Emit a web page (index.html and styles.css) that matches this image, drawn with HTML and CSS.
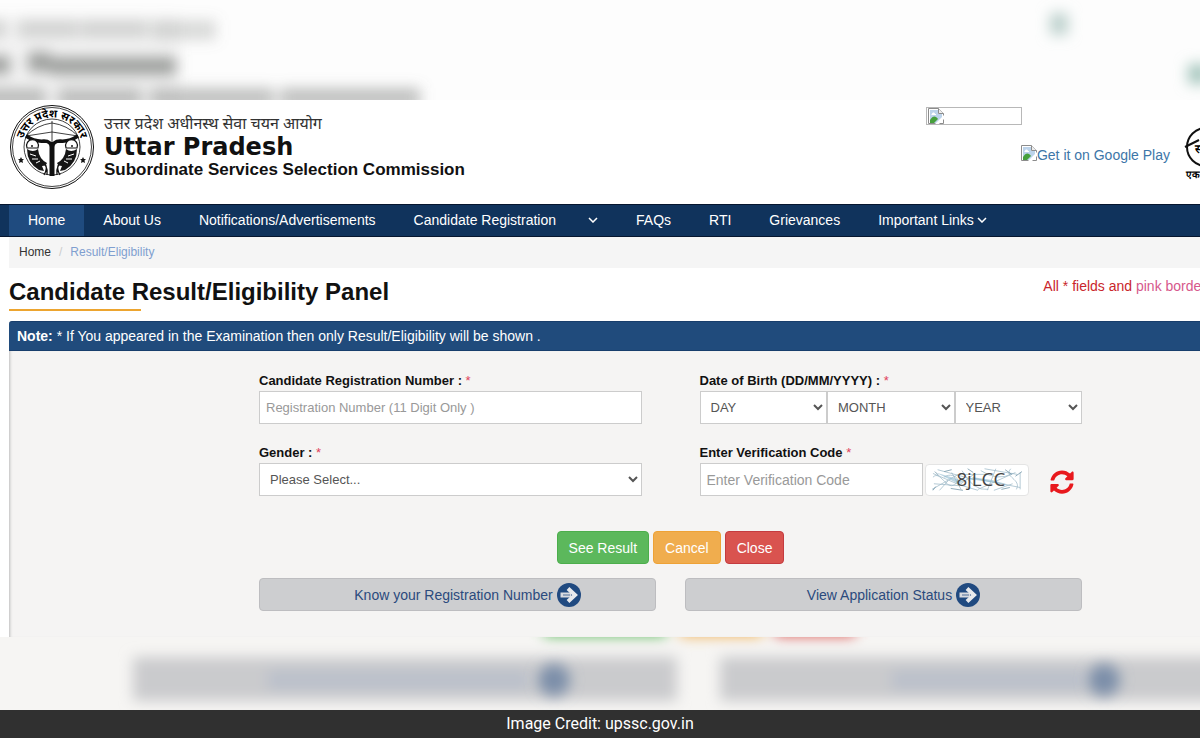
FILE: index.html
```html
<!DOCTYPE html>
<html lang="en">
<head>
    <meta charset="UTF-8">
    <meta name="viewport" content="width=device-width, initial-scale=1.0">
    <title>Candidate Result/Eligibility Panel</title>
    <link rel="stylesheet" href="styles.css">
</head>
<body>

<!-- Shared symbols -->
<svg class="symbols" width="0" height="0" aria-hidden="true">
    <symbol id="broken-image" viewBox="0 0 16 16">
        <path d="M.5.5h10l5 5v10H.5z" fill="#fff" stroke="#8c8c8c"/>
        <path d="M2 2h8v4h4v4l-5 5H2z" fill="#bcd3ea"/>
        <path d="M4 6c0-2 3-2 3 0h1v1H3z" fill="#fff"/>
        <path d="M2 15v-3c3-5 6-4 8-1l-4 4z" fill="#46a03c"/>
        <path d="M10.500.5v5h5" fill="#eee" stroke="#8c8c8c"/>
        <path d="M16 7L7 16h4l5-5z" fill="#fff"/>
    </symbol>
    <symbol id="arrow-circle" viewBox="0 0 24 24">
        <circle cx="12" cy="12" r="12" fill="#204a80"/>
        <path d="M3.500 9.500h10.500v5H3.500z" fill="#d8dbe0"/>
        <path d="M11 5.500l7 6.500-7 6.500" fill="none" stroke="#e8eaed" stroke-width="4"/>
        <path d="M6 12h7" stroke="#204a80" stroke-width="1.500" opacity=".5"/>
    </symbol>
    <symbol id="chevron" viewBox="0 0 10 6">
        <path d="M1 1l4 4 4-4" fill="none" stroke="#fff" stroke-width="1.500"/>
    </symbol>
</svg>

<!-- Blurred strip above the page -->
<div class="backdrop" aria-hidden="true">
    <svg width="100%" height="100">
        <defs>
            <filter id="soft" x="-20%" y="-80%" width="140%" height="260%"><feGaussianBlur stdDeviation="7"/></filter>
        </defs>
        <g filter="url(#soft)" fill="#7d807d">
            <rect x="-20" y="16" width="200" height="90" opacity=".07"/>
            <g opacity=".28">
                <rect x="-20" y="20" width="26" height="18"/>
                <rect x="18" y="20" width="60" height="18"/>
                <rect x="80" y="20" width="68" height="18"/>
                <rect x="152" y="20" width="64" height="20"/>
            </g>
            <g opacity=".72">
                <rect x="-20" y="56" width="30" height="18"/>
                <rect x="28" y="52" width="22" height="20"/>
                <rect x="50" y="57" width="126" height="18"/>
            </g>
            <g opacity=".48">
                <rect x="-20" y="88" width="66" height="20"/>
                <rect x="58" y="88" width="84" height="20"/>
                <rect x="150" y="88" width="124" height="20"/>
                <rect x="280" y="88" width="140" height="20"/>
            </g>
        </g>
        <g filter="url(#soft)">
            <rect x="1050" y="13" width="18" height="22" fill="#bcd0cc"/>
            <rect x="1188" y="64" width="20" height="20" fill="#a5c6bd"/>
        </g>
    </svg>
</div>

<div class="page">
    <header class="header">
        <svg class="emblem" viewBox="0 0 84 84" role="img" aria-label="Government of Uttar Pradesh emblem">
            <defs>
                <path id="emblem-arc" d="M13 50A30 30 0 1 1 71 50"/>
            </defs>
            <g fill="none" stroke="#111">
                <circle cx="42" cy="42" r="41.500"/>
                <circle cx="42" cy="42" r="39.500" stroke-width=".8"/>
                <circle cx="42" cy="42" r="28" stroke-width=".8"/>
                <path d="M16 31Q27 20 42 18Q57 20 68 31M16 31L42 27 68 31M42 16v22" stroke-width=".8"/>
                <path d="M16 31Q25 37 34 36Q41 36 42 43Q43 36 50 36Q59 37 68 31" stroke-width="3.500"/>
                <path d="M42 37v34" stroke-width="5"/>
                <path d="M37 70c1-8-2-11-6-14M47 70c-1-8 2-11 6-14M34 70q4-7 1-11M50 70q-4-7-1-11" stroke-width="1.300"/>
                <path d="M17 43a6 6 0 1 1 11 0zM56 43a6 6 0 1 1 11 0z" fill="#fff" stroke-width="1.200"/>
            </g>
            <g fill="#161616">
                <path d="M17 44Q17 58 29 65L34 66 32 61Q36 61 37 58Q29 54 28 44Q23 48 17 44z"/>
                <path d="M67 44Q67 58 55 65L50 66 52 61Q48 61 47 58Q55 54 56 44Q61 48 67 44z"/>
                <path d="M11 52l1 2h2l-1.500 1.500.5 2.500-2-1-2 1 .5-2.500L8 54h2zM73 52l1 2h2l-1.500 1.500.5 2.500-2-1-2 1 .5-2.500L70 54h2z"/>
                <circle cx="22" cy="41" r="1"/>
                <circle cx="62" cy="41" r="1"/>
            </g>
            <path d="M20 49l6 2M22 54l6 0M26 58l4-2M64 49l-6 2M62 54h-6M58 58l-4-2" stroke="#fff" stroke-width="1" fill="none"/>
            <text class="emblem-text"><textPath href="#emblem-arc" startOffset="50%" text-anchor="middle">उत्तर प्रदेश सरकार</textPath></text>
        </svg>
        <div class="brand">
            <p class="brand-hindi" lang="hi">उत्तर प्रदेश अधीनस्थ सेवा चयन आयोग</p>
            <p class="brand-state">Uttar Pradesh</p>
            <p class="brand-name">Subordinate Services Selection Commission</p>
        </div>
        <div class="header-links">
            <div class="missing-image"><svg width="16" height="16"><use href="#broken-image"/></svg></div>
            <a class="play-link" href="#"><svg width="16" height="16"><use href="#broken-image"/></svg>Get it on Google Play</a>
        </div>
        <!-- Swachh Bharat glasses, run off the right edge -->
        <svg class="swachh" viewBox="0 0 60 60" role="img" aria-label="Swachh Bharat">
            <g fill="none" stroke="#111" stroke-width="2">
                <circle cx="22" cy="20" r="19"/>
                <path d="M1 20L15 13"/>
            </g>
            <text x="11" y="26" class="swachh-word">स्वच्छ</text>
            <text x="2" y="51" class="swachh-line">एक कदम</text>
        </svg>
    </header>

    <nav class="nav">
        <a class="active" href="#">Home</a>
        <a href="#">About Us</a>
        <a href="#">Notifications/Advertisements</a>
        <a class="wide" href="#">Candidate Registration <svg width="10" height="6"><use href="#chevron"/></svg></a>
        <a href="#">FAQs</a>
        <a href="#">RTI</a>
        <a href="#">Grievances</a>
        <a class="drop" href="#">Important Links <svg width="10" height="6"><use href="#chevron"/></svg></a>
    </nav>

    <main class="content">
        <div class="breadcrumb">
            <a href="#">Home</a><span class="slash">/</span><span class="current">Result/Eligibility</span>
        </div>

        <div class="title-row">
            <h1>Candidate Result/Eligibility Panel</h1>
            <p class="hint">All * fields and <span>pink border</span></p>
        </div>

        <div class="note"><strong>Note:</strong> * If You appeared in the Examination then only Result/Eligibility will be shown .</div>

        <form class="panel">
            <div class="fields">
                <div class="field">
                    <label for="regno">Candidate Registration Number : <span class="req">*</span></label>
                    <input type="text" id="regno" class="control small" placeholder="Registration Number (11 Digit Only )">
                </div>
                <div class="field">
                    <label for="day">Date of Birth (DD/MM/YYYY) : <span class="req">*</span></label>
                    <div class="dob">
                        <select id="day" class="control"><option>DAY</option></select>
                        <select class="control" aria-label="Month"><option>MONTH</option></select>
                        <select class="control" aria-label="Year"><option>YEAR</option></select>
                    </div>
                </div>
                <div class="field">
                    <label for="gender">Gender : <span class="req">*</span></label>
                    <select id="gender" class="control"><option>Please Select...</option></select>
                </div>
                <div class="field">
                    <label for="code">Enter Verification Code <span class="req">*</span></label>
                    <div class="verify">
                        <input type="text" id="code" class="control" placeholder="Enter Verification Code">
                        <svg class="captcha" viewBox="0 0 104 32" role="img" aria-label="Verification code image">
                            <g fill="none" stroke="#9dbac8" stroke-width=".8">
                                <path d="M5 9l28 12 20 6M6 20l26 2 18-13M10 5l40 11M4 26l28-16M5 13c8-8 14 14 23 8s-3-14-11-8M60 4l35 6M53 26l40-18M48 14l50 10M72 4l-9 23M88 4c-8 9 12 11 6 22M98 8v18M36 6q12 22 28 20M12 27l9-10M25 8l10 18M40 10h22M56 6q18 12 34 3M70 27l20-7"/>
                                <path d="M7 7l4 4M8 23l-3 4M17 7l8-2M24 25l13 2M42 4l6 4M78 26l9-2M93 12l7-5M82 5l7 5" stroke="#6f93a6"/>
                            </g>
                            <path d="M8 8l24 12 12-5 20 3 22 3-18-5-20-3-10 4z" fill="#8db9ce" opacity=".6"/>
                            <text x="30" y="22">8jLCC</text>
                        </svg>
                        <button type="button" class="refresh" aria-label="Refresh code">
                            <svg width="24" height="24" viewBox="0 0 512 512">
                                <path fill="#e8191d" d="M371 133C339 104 299 88 256 88c-77 0-144 53-163 127-1 5-6 9-12 9H24c-7 0-13-7-12-14C34 95 135 8 256 8c66 0 127 26 171 69l36-36c15-15 41-4 41 17v134c0 13-11 24-24 24H346c-21 0-32-26-17-41zM32 296h134c21 0 32 26 17 41l-42 42c31 29 72 45 115 45 77 0 144-53 163-127 1-5 6-9 12-9h57c7 0 13 7 12 14-22 115-123 202-244 202-66 0-127-26-171-69l-36 36c-15 15-41 4-41-17V320c0-13 11-24 24-24z"/>
                            </svg>
                        </button>
                    </div>
                </div>
            </div>

            <div class="actions">
                <button type="submit" class="btn btn-success">See Result</button>
                <button type="reset" class="btn btn-warning">Cancel</button>
                <button type="button" class="btn btn-danger">Close</button>
            </div>

            <div class="links">
                <a class="link-btn" href="#">Know your Registration Number <svg width="24" height="24"><use href="#arrow-circle"/></svg></a>
                <a class="link-btn" href="#">View Application Status <svg width="24" height="24"><use href="#arrow-circle"/></svg></a>
            </div>
        </form>
    </main>
</div>

<!-- Blurred strip below the page -->
<div class="backdrop backdrop-bottom" aria-hidden="true">
    <svg width="100%" height="73">
        <g filter="url(#soft)">
            <rect x="544" y="-16" width="122" height="15" fill="#5cb85c"/>
            <rect x="680" y="-16" width="82" height="15" fill="#f0ad4e"/>
            <rect x="775" y="-16" width="80" height="15" fill="#d9534f"/>
            <rect x="133" y="20" width="544" height="44" fill="#cacbcd"/>
            <rect x="720" y="20" width="544" height="44" fill="#cacbcd"/>
            <rect x="268" y="34" width="260" height="18" fill="#b9bfcb"/>
            <rect x="892" y="34" width="192" height="18" fill="#b9bfcb"/>
        </g>
        <g filter="url(#soft)" fill="#7c8ea9">
            <circle cx="554" cy="43" r="16"/>
            <circle cx="1104" cy="43" r="16"/>
        </g>
    </svg>
</div>

<footer class="credit">Image Credit: upssc.gov.in</footer>

</body>
</html>
```
FILE: styles.css
```css
* {
    box-sizing: border-box;
}

body {
    margin: 0;
    font-family: "Liberation Sans", Arial, sans-serif;
    font-size: 14px;
    line-height: 20px;
    color: #111;
    background-color: #fefefe;
    overflow-x: hidden;
}

a {
    text-decoration: none;
}

p, h1 {
    margin: 0;
}

.symbols {
    position: absolute;
}

/* Blurred strips */
.backdrop {
    overflow: hidden;
    background-color: #fdfdfd;
}

.backdrop svg {
    display: block;
}

.backdrop-bottom {
    background-color: #f6f5f3;
}

.page {
    background-color: #fff;
    overflow: hidden;
}

/* Header */
.header {
    display: flex;
    height: 104px;
    padding: 5px 0 0 10px;
}

.emblem {
    width: 84px;
    height: 84px;
    flex: none;
}

.emblem-text {
    font-family: "Noto Sans", "Noto Sans Devanagari", sans-serif;
    font-size: 11px;
    font-weight: bold;
}

.brand {
    margin-left: 10px;
    padding-top: 6px;
    white-space: nowrap;
}

.brand-hindi {
    font-family: "Noto Sans", "Noto Sans Devanagari", sans-serif;
    font-size: 16px;
    line-height: 24px;
    color: #333;
}

.brand-state {
    font-family: "DejaVu Sans", Verdana, sans-serif;
    font-size: 24px;
    font-weight: bold;
    line-height: 24px;
}

.brand-name {
    font-size: 17px;
    font-weight: bold;
    line-height: 22px;
}

.header-links {
    display: flex;
    flex-direction: column;
    align-items: flex-end;
    gap: 20px;
    margin-left: auto;
    padding-top: 2px;
    white-space: nowrap;
}

.missing-image {
    width: 96px;
    height: 18px;
    padding: 0 1px;
    margin-right: 148px;
    border: 1px solid #b8b8b8;
}

.missing-image svg {
    display: block;
}

.play-link {
    display: flex;
    color: #3d76a8;
}

.swachh {
    width: 60px;
    height: 60px;
    flex: none;
    margin: 22px -44px 0 14px;
}

.swachh-word {
    font-size: 12px;
    font-weight: bold;
}

.swachh-line {
    font-size: 10px;
    font-weight: bold;
}

/* Navigation */
.nav {
    display: flex;
    height: 33px;
    padding-left: 9px;
    background-color: #10335c;
    border-top: 1px solid #06162f;
    border-bottom: 1px solid #06162f;
    line-height: 18px;
    white-space: nowrap;
}

.nav a {
    display: flex;
    align-items: center;
    padding: 0 19px 2px;
    color: #fff;
}

.nav .active {
    background-color: #1f4b7f;
}

.nav .wide {
    gap: 32px;
}

.nav .drop {
    gap: 3px;
}

/* Content */
.content {
    padding-left: 9px;
}

.breadcrumb {
    height: 31px;
    padding: 5px 10px;
    font-size: 12px;
    background-color: #f5f5f5;
}

.breadcrumb a {
    color: #333;
}

.slash {
    padding: 0 8px;
    color: #ccc;
}

.current {
    color: #7f9fd0;
}

.title-row {
    display: flex;
    justify-content: space-between;
    height: 53px;
    padding-top: 8px;
    white-space: nowrap;
}

h1 {
    height: 35px;
    font-size: 24px;
    line-height: 32px;
    /* short underline below the heading */
    background: linear-gradient(#eda52f, #eda52f) left bottom / 132px 2px no-repeat;
}

.hint {
    margin-right: -6px;
    color: #c9252b;
}

.hint span {
    color: #d6588c;
}

.note {
    height: 30px;
    padding: 4px 8px;
    color: #fff;
    background-color: #204b7c;
    border: 1px solid #183e6c;
    border-width: 1px 0;
    border-radius: 3px 0 0 0;
}

/* Form panel */
.panel {
    padding: 20px 118px 26px 250px;
    background-color: #f5f4f3;
    box-shadow: inset 3px 0 3px -2px #bbb;
}

.fields {
    display: grid;
    grid-template-columns: 1fr 1fr;
    gap: 19px 58px;
}

.field {
    min-width: 0;
}

label {
    display: block;
    font-size: 13px;
    font-weight: bold;
    line-height: 20px;
}

.req {
    color: #e0405a;
    font-weight: normal;
}

.control {
    display: block;
    width: 100%;
    height: 33px;
    padding: 0 6px;
    font-family: inherit;
    font-size: 14px;
    color: #555;
    background-color: #fff;
    border: 1px solid #ccc;
    border-radius: 0;
}

.control.small,
select.control {
    font-size: 13px;
}

.control::placeholder {
    color: #999;
}

.dob {
    display: flex;
}

.verify {
    display: flex;
    align-items: center;
}

.verify .control {
    flex: 1;
    min-width: 0;
}

.captcha {
    width: 104px;
    height: 32px;
    margin-left: 2px;
    background-color: #fff;
    border: 1px solid #e4e4e4;
    border-radius: 4px;
}

.captcha text {
    font-family: "Open Sans", sans-serif;
    font-size: 20px;
    fill: #444;
}

.refresh {
    display: flex;
    margin: 4px 8px 0 21px;
    padding: 0;
    background: none;
    border: none;
    cursor: pointer;
}

.actions {
    display: flex;
    justify-content: center;
    gap: 4px;
    margin-top: 35px;
}

.btn {
    height: 33px;
    padding: 0 11px;
    font-family: inherit;
    font-size: 14px;
    color: #fff;
    border: 1px solid;
    border-radius: 4px;
    cursor: pointer;
}

.btn-success {
    background-color: #5cb85c;
    border-color: #4cae4c;
}

.btn-warning {
    background-color: #f0ad4e;
    border-color: #eea236;
}

.btn-danger {
    background-color: #d9534f;
    border-color: #c43b40;
}

.links {
    display: grid;
    grid-template-columns: 1fr 1fr;
    gap: 29px;
    margin-top: 14px;
}

.link-btn {
    display: flex;
    justify-content: center;
    align-items: center;
    gap: 4px;
    height: 33px;
    padding-left: 20px;
    color: #2b4a7d;
    background-color: #cdced0;
    border: 1px solid #bdbdc0;
    border-radius: 4px;
}

.credit {
    height: 28px;
    font-family: Roboto, sans-serif;
    font-size: 16px;
    line-height: 28px;
    text-align: center;
    color: #fff;
    background-color: #303030;
}
```
